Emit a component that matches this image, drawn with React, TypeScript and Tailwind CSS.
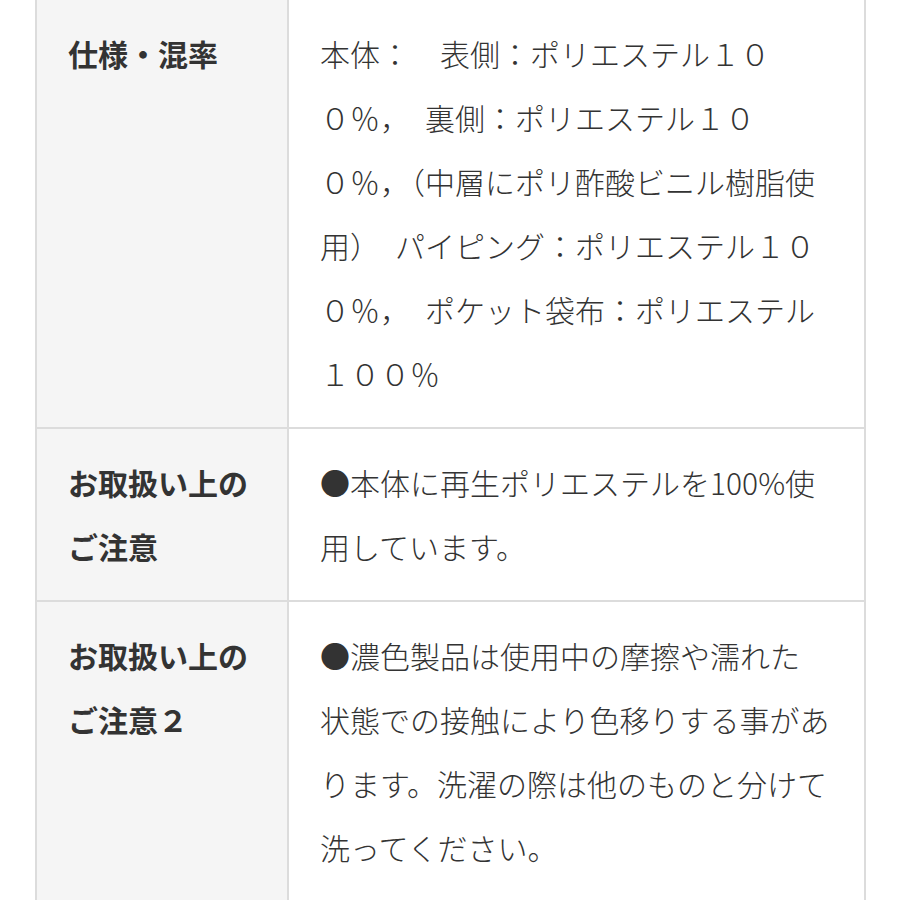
import React from 'react';

type Row = {
  label: string;
  lines: string[];
};

const rows: Row[] = [
  {
    label: '仕様・混率',
    lines: [
      '本体：　表側：ポリエステル１０',
      '０％，\u2002裏側：ポリエステル１０',
      '０％，（中層にポリ酢酸ビニル樹脂使',
      '用）\u2002パイピング：ポリエステル１０',
      '０％，\u2002ポケット袋布：ポリエステル',
      '１００％',
    ],
  },
  {
    label: 'お取扱い上のご注意',
    lines: ['●本体に再生ポリエステルを100%使', '用しています。'],
  },
  {
    label: 'お取扱い上のご注意２',
    lines: [
      '●濃色製品は使用中の摩擦や濡れた',
      '状態での接触により色移りする事があ',
      'ります。洗濯の際は他のものと分けて',
      '洗ってください。',
    ],
  },
];

function App() {
  return (
    <div
      className="h-[900px] overflow-hidden bg-white text-[30px] leading-[64px] text-[#333]"
      style={{ fontFamily: '"Noto Sans CJK JP", "Noto Sans", sans-serif' }}
    >
      <div className="ml-[35px] w-[831px] border-x-2 border-[#dcdcdc]">
        {rows.map((row, i) => (
          <div key={i} className="flex border-b-2 border-[#dcdcdc]">
            <div className="w-[252px] shrink-0 border-r-2 border-[#dcdcdc] bg-[#f5f5f5] px-[31px] pt-[21px] pb-[22px] font-bold">
              {row.label}
            </div>
            <div className="flex-1 pt-[21px] pb-[22px] pl-[31px] pr-[30px] font-light">
              {row.lines.map((line, j) => (
                <div key={j} className="whitespace-nowrap">
                  {line}
                </div>
              ))}
              {i === rows.length - 1 && <div className="h-[40px]" />}
            </div>
          </div>
        ))}
      </div>
    </div>
  );
}

export default App;
